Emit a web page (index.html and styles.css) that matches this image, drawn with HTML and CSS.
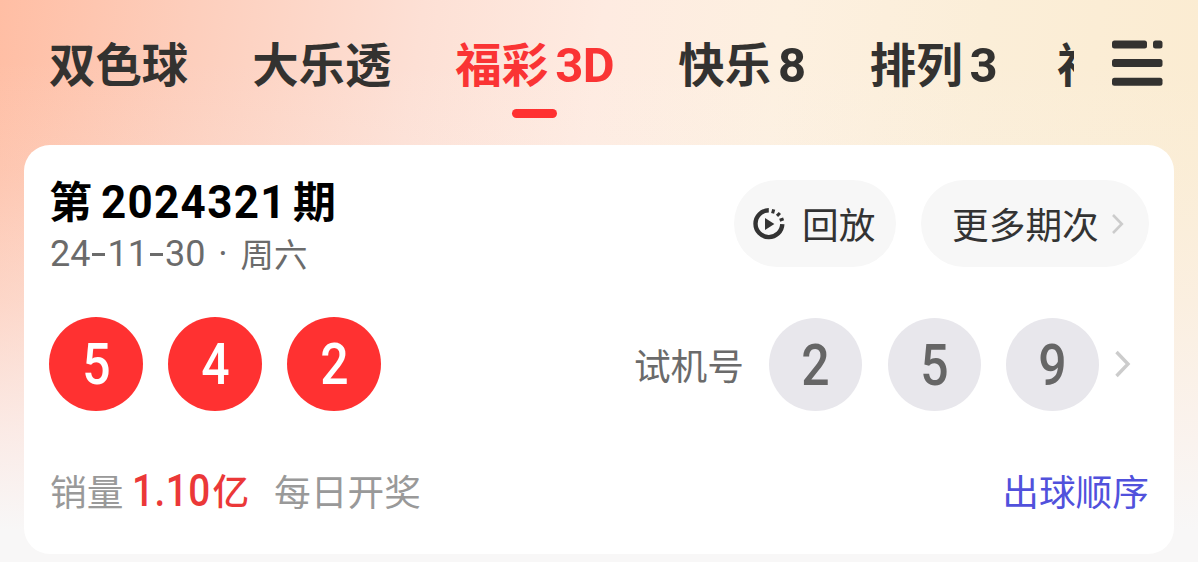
FILE: index.html
```html
<!DOCTYPE html>
<html lang="zh-CN">
<head>
<meta charset="utf-8">
<title>福彩3D</title>
<link rel="stylesheet" href="styles.css">
</head>
<body>
<div class="page">
  <header class="topbar">
    <nav class="tabs">
      <span class="tab">双色球</span>
      <span class="tab">大乐透</span>
      <span class="tab tab-active">福彩<span class="tab-num">3D</span></span>
      <span class="tab">快乐<span class="tab-num">8</span></span>
      <span class="tab">排列<span class="tab-num">3</span></span>
      <span class="tab">福</span>
    </nav>
    <svg class="menu" width="52" height="48" viewBox="0 0 52 48" fill="#333230">
      <rect x="0" y="0.5" width="35" height="8" rx="2.5"/>
      <rect x="41" y="0.5" width="9.5" height="8" rx="2.5"/>
      <rect x="0" y="19" width="50.5" height="8" rx="2.5"/>
      <rect x="0" y="37.7" width="50.5" height="8" rx="2.5"/>
    </svg>
  </header>

  <main class="card">
    <section class="head">
      <div class="issue">
        <div class="issue-title"><span class="cjk">第</span><span class="issue-num">2024321</span><span class="cjk">期</span></div>
        <div class="issue-date"><span class="date-num">24<i class="dash"></i>11<i class="dash"></i>30</span><span class="dot">·</span><span class="cjk">周六</span></div>
      </div>
      <div class="actions">
        <div class="pill pill-replay">
          <svg width="32" height="32" viewBox="0 0 32 32" fill="none" stroke="#333">
            <path d="M15.8 2.3A13.4 13.4 0 1 0 29.3 16.2" stroke-width="4.4"/>
            <path d="M19.6 5.3L20.7 1.4M24 7.9L26.9 5M26.7 12.2L30.6 10.9" stroke-width="3.1"/>
            <path d="M12 10v12l9.4-6z" fill="#333" stroke="none"/>
          </svg>
          <span class="cjk">回放</span>
        </div>
        <div class="pill pill-more">
          <span class="cjk">更多期次</span>
          <svg width="14" height="20" viewBox="0 0 14 20" fill="none" stroke="#ccc" stroke-width="2.6"><path d="M2 1l8.8 9L2 19"/></svg>
        </div>
      </div>
    </section>

    <section class="draw">
      <div class="balls">
        <div class="ball"><span>5</span></div>
        <div class="ball"><span>4</span></div>
        <div class="ball"><span>2</span></div>
      </div>
      <div class="trial">
        <span class="trial-label">试机号</span>
        <div class="balls balls-trial">
          <div class="ball ball-gray"><span>2</span></div>
          <div class="ball ball-gray"><span>5</span></div>
          <div class="ball ball-gray"><span>9</span></div>
        </div>
        <svg width="18" height="28" viewBox="0 0 18 28" fill="none" stroke="#ccc" stroke-width="3.4"><path d="M2.5 2l11.5 12L2.5 26"/></svg>
      </div>
    </section>

    <section class="foot">
      <span>销量</span>
      <span class="sales"><span class="sales-num">1.10</span>亿</span>
      <span>每日开奖</span>
      <span class="order">出球顺序</span>
    </section>
  </main>
</div>
</body>
</html>
```
FILE: styles.css
```css
* { box-sizing: border-box; }
body {
  margin: 0;
  font-family: "Noto Sans CJK SC", sans-serif;
  color: #333;
}
.page {
  width: 1198px;
  height: 562px;
  overflow: hidden;
  background:
    linear-gradient(180deg, rgba(248,247,247,0) 60px, rgba(248,246,247,.12) 170px, rgba(250,243,243,.42) 300px, rgba(250,244,244,.8) 430px, #f8f7f7 530px),
    linear-gradient(98deg, #ffbea4 0, #fdcebc 190px, #fde0d5 420px, #feebe1 600px, #fdf0e0 780px, #fbeed8 980px, #fbecd2 1200px);
}
.topbar { display: flex; height: 145px; padding-left: 49px; }
.tabs {
  display: flex;
  gap: 64px;
  width: 1025px;
  height: 145px;
  overflow: hidden;
  padding-top: 28px;
  font-size: 46.4px;
  font-weight: 700;
  line-height: 68px;
  white-space: nowrap;
  color: #333230;
}
.tab { flex: none; }
.tab:last-child { margin-left: -4px; }
.tab-num {
  font-family: Roboto, sans-serif;
  font-size: 49px;
  margin-left: 7px;
  letter-spacing: -.4px;
}
.tab-active { color: #fa3434; }
.tab-active::after {
  content: "";
  display: block;
  width: 45px;
  height: 9px;
  margin: 9px auto 0;
  border-radius: 5px;
  background: #ff3131;
}
.menu { margin: 40px 0 0 38px; }

.card {
  width: 1150px;
  height: 409px;
  margin-left: 24px;
  padding: 35px 25px 0;
  border-radius: 26px;
  background: #fff;
}
.cjk { margin-bottom: 2px; }
.head { display: flex; justify-content: space-between; height: 137px; }
.issue-title {
  height: 44px;
  display: flex;
  align-items: center;
  font-size: 43px;
  font-weight: 700;
  line-height: 44px;
  color: #000;
}
.issue-title .cjk { margin-bottom: 6px; }
.issue-num {
  width: 185px;
  margin: 0 7px 0 9px;
  font-family: Roboto, sans-serif;
  font-size: 46.5px;
  letter-spacing: 1.4px;
  transform: scaleX(.945);
  transform-origin: left;
}
.issue-date {
  display: flex;
  align-items: center;
  height: 42px;
  margin-top: 9px;
  font-size: 33.5px;
  line-height: 42px;
  color: #6b6b6b;
}
.date-num {
  display: flex;
  align-items: center;
  margin-left: 1px;
  font-family: Roboto, sans-serif;
  font-size: 36px;
}
.dash { width: 13px; height: 3px; margin: 1px 2px 0; background: #6b6b6b; }
.dot { width: 35px; text-align: center; font-family: Roboto, sans-serif; font-size: 36px; }
.actions { display: flex; gap: 25px; }
.pill {
  display: flex;
  align-items: center;
  height: 87px;
  border-radius: 44px;
  background: #f7f7f7;
  font-size: 36.7px;
  line-height: 54px;
}
.pill-replay { width: 162px; padding-left: 19px; gap: 17px; }
.pill-more { width: 228px; padding-left: 31px; gap: 12px; }

.draw { display: flex; justify-content: space-between; height: 94px; }
.balls { display: flex; gap: 25px; }
.ball {
  display: flex;
  align-items: center;
  justify-content: center;
  width: 94px;
  height: 94px;
  border-radius: 50%;
  background: #ff3131;
  color: #fff;
  font-family: Roboto, sans-serif;
  font-size: 58px;
  font-weight: 500;
}
.ball span { transform: scaleX(.86); }
.trial { display: flex; align-items: center; padding-right: 17px; }
.trial-label { margin: 0 25px 0 0; font-size: 36.7px; color: #6b6b6b; }
.balls-trial { gap: 25.5px; }
.ball-gray { width: 93px; height: 93px; padding-top: 2px; background: #e8e7ec; color: #666; }
.trial svg { margin-left: 15px; }

.foot {
  display: flex;
  align-items: center;
  height: 54px;
  margin-top: 52px;
  padding-left: 1px;
  font-size: 36.7px;
  line-height: 54px;
  color: #999;
}
.sales { display: flex; margin: 0 25px 0 9px; font-weight: 500; color: #eb3838; }
.sales-num {
  width: 80px;
  font-family: Roboto, sans-serif;
  font-size: 45px;
  line-height: 57px;
  letter-spacing: .6px;
  transform: scaleX(.86);
  transform-origin: left;
}
.order { margin-left: auto; color: #5151dc; }
```
